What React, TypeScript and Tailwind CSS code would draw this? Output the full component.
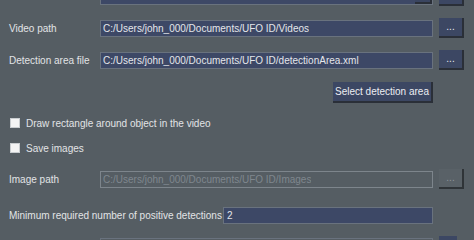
import React from "react";

const font = { fontFamily: '"Liberation Sans", Arial, sans-serif' };

function PathField({ value, disabled }: { value: string; disabled?: boolean }) {
  return (
    <div
      className={
        disabled
          ? "flex h-[17px] min-w-0 flex-1 items-center border border-[#7d858c] bg-[#555d63] px-[2px] text-[#7f878e]"
          : "flex h-[17px] min-w-0 flex-1 items-center border border-[#69727e] bg-[#3d4866] px-[2px] text-[#e4e6ea]"
      }
    >
      <span className="truncate">{value}</span>
    </div>
  );
}

function DotsButton({ disabled, empty }: { disabled?: boolean; empty?: boolean }) {
  return (
    <div
      className={
        disabled
          ? "ml-[6px] flex h-[20px] w-[25px] shrink-0 items-center justify-center border-b-2 border-r-2 border-[#2f3438] bg-[#596167] text-[#8d949a]"
          : "ml-[6px] flex h-[20px] w-[25px] shrink-0 items-center justify-center border-b-2 border-r-2 border-[#2a2f38] bg-[#3c4763] text-[#e8eaee]"
      }
    >
      {!empty && <span className="leading-none">...</span>}
    </div>
  );
}

function PathRow({ label, value, disabled, h }: { label: string; value: string; disabled?: boolean; h: string }) {
  return (
    <div className={`flex ${h} items-center`}>
      <div className="w-[91px] shrink-0 whitespace-nowrap text-[#e2e4e6]">{label}</div>
      <PathField value={value} disabled={disabled} />
      <DotsButton disabled={disabled} />
    </div>
  );
}

function Check({ label, h }: { label: string; h: string }) {
  return (
    <div className={`flex ${h} items-center`}>
      <div className="ml-[1px] h-[10px] w-[10px] border border-[#c9cdd0] bg-[#f4f4f4]" />
      <span className="ml-[6px] whitespace-nowrap text-[#e2e4e6]">{label}</span>
    </div>
  );
}

export default function App() {
  return (
    <div className="h-[240px] w-[474px] overflow-hidden bg-[#555d63] text-[10px]" style={font}>
      <div className="mt-[-20px] flex flex-col pl-[9px] pr-[10px]">
        <div className="flex h-[32px] items-center">
          <div className="w-[91px] shrink-0" />
          <div className="flex h-[18px] flex-1 border border-[#69727e] bg-[#3d4866]">
            <div className="flex-1" />
            <div className="w-[17px] border-b-2 border-r-2 border-[#2a2f38] bg-[#3a4560]" />
          </div>
          <DotsButton empty />
        </div>
        <PathRow h="h-[32px]" label="Video path" value="C:/Users/john_000/Documents/UFO ID/Videos" />
        <PathRow h="h-[32px]" label="Detection area file" value="C:/Users/john_000/Documents/UFO ID/detectionArea.xml" />
        <div className="flex h-[32px] items-center">
          <div className="flex-1" />
          <div className="mr-[31px] flex h-[21px] w-[100px] items-center justify-center whitespace-nowrap border-b-2 border-r-2 border-[#2a2f38] bg-[#3c4763] text-[#eceef2]">
            Select detection area
          </div>
        </div>
        <Check h="h-[30px]" label="Draw rectangle around object in the video" />
        <Check h="h-[20px]" label="Save images" />
        <PathRow h="h-[42px]" label="Image path" value="C:/Users/john_000/Documents/UFO ID/Images" disabled />
        <div className="flex h-[30px] items-center">
          <div className="w-[214px] shrink-0 whitespace-nowrap text-[#e2e4e6]">Minimum required number of positive detections</div>
          <div className="flex h-[17px] flex-1 items-center border border-[#69727e] bg-[#3d4866] px-[3px] text-[#e4e6ea]">2</div>
          <div className="w-[31px]" />
        </div>
        <div className="flex h-[32px] items-center">
          <div className="w-[91px] shrink-0">
            <div className="ml-[1px] h-[10px] w-[10px] bg-[#2d3238]" />
          </div>
          <div className="h-[17px] flex-1 border border-[#69727e] bg-[#555d63]" />
          <div className="ml-[6px] h-[20px] w-[18px] bg-[#3c4763]" />
          <div className="w-[7px]" />
        </div>
      </div>
    </div>
  );
}
